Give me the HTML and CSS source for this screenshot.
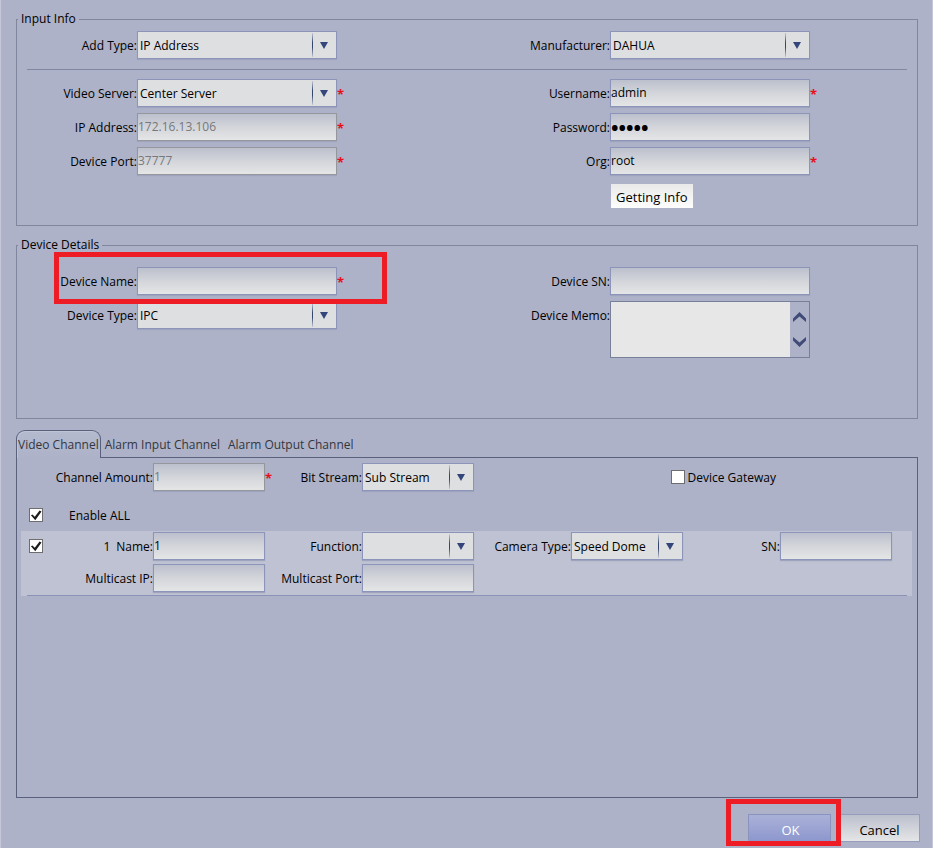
FILE: index.html
```html
<!DOCTYPE html>
<html lang="en">
<head>
	<meta charset="UTF-8">
	<meta name="viewport" content="width=device-width, initial-scale=1.0">
	<title>Add Device</title>
	<link rel="stylesheet" href="styles.css">
</head>
<body>
	<form class="dialog">
		<fieldset class="group">
			<legend>Input Info</legend>
			<div class="form">
				<label for="add-type">Add Type:</label>
				<div class="field">
					<span class="select"><select id="add-type"><option>IP Address</option></select></span>
				</div>
				<label for="manufacturer">Manufacturer:</label>
				<div class="field">
					<span class="select"><select id="manufacturer"><option>DAHUA</option></select></span>
				</div>
			</div>
			<hr class="line">
			<div class="form">
				<label for="video-server">Video Server:</label>
				<div class="field">
					<span class="select"><select id="video-server"><option>Center Server</option></select></span>
					<span class="required">*</span>
				</div>
				<label for="username">Username:</label>
				<div class="field">
					<input class="text" id="username" type="text" value="admin">
					<span class="required">*</span>
				</div>

				<label for="ip">IP Address:</label>
				<div class="field">
					<input class="text" id="ip" type="text" value="172.16.13.106" disabled>
					<span class="required">*</span>
				</div>
				<label for="password">Password:</label>
				<div class="field">
					<input class="text" id="password" type="password" value="admin">
				</div>

				<label for="port">Device Port:</label>
				<div class="field">
					<input class="text" id="port" type="text" value="37777" disabled>
					<span class="required">*</span>
				</div>
				<label for="org">Org:</label>
				<div class="field">
					<input class="text" id="org" type="text" value="root">
					<span class="required">*</span>
				</div>

				<div class="field field_last">
					<button class="get-info" type="button">Getting Info</button>
				</div>
			</div>
		</fieldset>

		<fieldset class="group group_details">
			<legend>Device Details</legend>
			<div class="form">
				<label for="device-name">Device Name:</label>
				<div class="field field_marked">
					<input class="text" id="device-name" type="text">
					<span class="required">*</span>
				</div>
				<label for="device-sn">Device SN:</label>
				<div class="field">
					<input class="text" id="device-sn" type="text">
				</div>

				<label for="device-type">Device Type:</label>
				<div class="field">
					<span class="select"><select id="device-type"><option>IPC</option></select></span>
				</div>
				<label for="memo">Device Memo:</label>
				<div class="memo">
					<textarea id="memo"></textarea>
					<div class="memo__scroll">
						<button type="button" aria-label="Up">
							<svg width="13" height="10" viewBox="0 0 13 10"><path d="M0 6.5 6.5 0 13 6.5V10L6.5 4.5 0 10z"/></svg>
						</button>
						<button type="button" aria-label="Down">
							<svg width="13" height="10" viewBox="0 0 13 10"><path d="M0 3.5 6.5 10 13 3.5V0L6.5 5.5 0 0z"/></svg>
						</button>
					</div>
				</div>
			</div>
		</fieldset>

		<div class="tabs" role="tablist">
			<button class="tab tab_active" type="button" role="tab" aria-selected="true">Video Channel</button>
			<button class="tab" type="button" role="tab">Alarm Input Channel</button>
			<button class="tab" type="button" role="tab">Alarm Output Channel</button>
		</div>
		<div class="channels" role="tabpanel">
			<div class="channels__row">
				<div class="cell cell_first">
					<label for="amount">Channel Amount:</label>
					<input class="text" id="amount" type="text" value="1" disabled>
					<span class="required">*</span>
				</div>
				<div class="cell">
					<label for="stream">Bit Stream:</label>
					<span class="select"><select id="stream"><option>Sub Stream</option></select></span>
				</div>
				<div class="gateway">
					<input class="check" id="gateway" type="checkbox">
					<label for="gateway">Device Gateway</label>
				</div>
			</div>
			<div class="enable">
				<input class="check" id="enable-all" type="checkbox" checked>
				<label for="enable-all">Enable ALL</label>
			</div>
			<div class="channel">
				<div class="channels__row">
					<input class="check" type="checkbox" aria-label="Channel 1" checked>
					<div class="cell">
						<span class="number">1</span>
						<label for="name-1">Name:</label>
						<input class="text" id="name-1" type="text" value="1">
					</div>
					<div class="cell">
						<label for="function-1">Function:</label>
						<span class="select"><select id="function-1"><option></option></select></span>
					</div>
					<div class="cell">
						<label for="camera-1">Camera Type:</label>
						<span class="select"><select id="camera-1"><option>Speed Dome</option></select></span>
					</div>
					<div class="cell">
						<label for="sn-1">SN:</label>
						<input class="text" id="sn-1" type="text">
					</div>
					<div class="cell cell_first">
						<label for="multicast-ip-1">Multicast IP:</label>
						<input class="text" id="multicast-ip-1" type="text">
					</div>
					<div class="cell">
						<label for="multicast-port-1">Multicast Port:</label>
						<input class="text" id="multicast-port-1" type="text">
					</div>
				</div>
				<hr class="channel__line">
			</div>
		</div>

		<div class="buttons">
			<div class="buttons__ok">
				<button class="button button_ok" type="submit">OK</button>
			</div>
			<button class="button" type="button">Cancel</button>
		</div>
	</form>
</body>
</html>
```
FILE: styles.css
```css
*, ::before, ::after {
	box-sizing: border-box;
}
body {
	margin: 0;
	background: #adb2c8;
	color: #000;
	font: 12px/16px "Open Sans", "Noto Sans", sans-serif;
}
input, select, textarea, button {
	font: inherit;
	color: inherit;
	margin: 0;
	border-radius: 0;
}
.dialog {
	min-height: 100vh;
	padding: 11px 14px 0 15px;
	border-left: 1px solid #c3c7d8;
	border-right: 1px solid #c3c7d8;
}

/* groups */
.group {
	min-width: 0;
	margin: 0 0 11px;
	padding: 4px 0 16px;
	border: 1px solid #80869d;
}
.group legend {
	margin-left: 1px;
	padding: 0 3px;
}
.group_details {
	padding: 14px 0 60px;
}
.line {
	height: 1px;
	margin: 10px 10px 9px;
	border: none;
	background: #8087a1;
}
.form {
	display: grid;
	grid-template-columns: 120px 23fr 120px 20fr;
	row-gap: 6px;
}
.form label {
	line-height: 30px;
	height: 28px;
	text-align: right;
	white-space: nowrap;
}
.field {
	display: flex;
	align-items: center;
	height: 28px;
}
.field .text,
.field .select {
	width: 200px;
}
.field_last {
	grid-column: 4;
	align-items: flex-end;
}

/* red frames over the form */
.field_marked,
.buttons__ok {
	position: relative;
}
.field_marked::after,
.buttons__ok::after {
	content: "";
	position: absolute;
	border: 5px solid #ee1c24;
	pointer-events: none;
}
.field_marked::after {
	z-index: 1;
	top: -15px;
	left: -83px;
	width: 333px;
	height: 52px;
}
.buttons__ok::after {
	top: -15px;
	left: -22px;
	right: -10px;
	height: 47px;
}

/* controls */
.text {
	min-width: 0;
	height: 28px;
	padding: 0 0 2px;
	border: 1px solid #8c94b9;
	background: linear-gradient(#bcc0cd, #d3d5da 50%, #e4e5e6);
	box-shadow: 0 1px 1px #9ea4bd;
}
.text:disabled {
	border-color: #96979c;
	color: #77787b;
}
.text[type="password"] {
	padding-bottom: 0;
	font-size: 20px;
	font-weight: 700;
}
.select {
	position: relative;
	display: block;
}
.select select {
	display: block;
	width: 100%;
	height: 28px;
	padding: 1px 26px 0 2px;
	appearance: none;
	border: 1px solid #8c94b9;
	background: #dddfe1;
	box-shadow: 0 1px 1px #9ea4bd;
}
.select::before {
	content: "";
	position: absolute;
	top: 2px;
	bottom: 2px;
	right: 24px;
	width: 1px;
	background: linear-gradient(#c3c8d4, #36466e 40%, #36466e 60%, #c3c8d4);
	pointer-events: none;
}
.select::after {
	content: "";
	position: absolute;
	top: 11px;
	right: 9px;
	width: 8px;
	height: 7px;
	background: #34457b;
	clip-path: polygon(0 0, 100% 0, 50% 100%);
	pointer-events: none;
}
.required {
	padding: 2px 0 0;
	color: #e5101c;
	font-size: 13px;
	font-weight: 700;
}
.get-info {
	height: 24px;
	margin: 0 0 1px 1px;
	padding: 2px 5px 0;
	border: none;
	background: linear-gradient(#e9e9ea, #fdfdfd);
	font-size: 13px;
}
.check {
	appearance: none;
	width: 14px;
	height: 14px;
	border: 1px solid #6d6d6f;
	background: #fff;
}
.check:checked::before {
	content: "";
	display: block;
	width: 12px;
	height: 12px;
	background: #1c1c1c;
	clip-path: polygon(8% 52%, 20% 45%, 40% 64%, 80% 12%, 96% 20%, 44% 94%);
}
.memo {
	display: flex;
	width: 200px;
	height: 57px;
	border: 1px solid #787f98;
}
.memo textarea {
	flex: 1;
	min-width: 0;
	padding: 2px;
	border: none;
	background: #e7e7e7;
	resize: none;
}
.memo__scroll {
	display: flex;
	flex-direction: column;
	justify-content: space-between;
	width: 19px;
	padding: 10px 3px;
}
.memo__scroll button {
	height: 10px;
	padding: 0;
	border: none;
	background: none;
}
.memo svg {
	display: block;
	fill: #414b78;
}

/* tabs */
.tabs {
	display: flex;
}
.tab {
	height: 27px;
	padding: 2px 3px 0;
	border: 1px solid transparent;
	border-bottom: none;
	background: none;
	color: #33363f;
	white-space: nowrap;
}
.tab_active {
	z-index: 1;
	height: 28px;
	margin-bottom: -1px;
	padding: 1px 1px 0;
	border-color: #59617d;
	border-radius: 9px 9px 0 0;
	background: linear-gradient(#b4bace, #adb2c8);
	box-shadow: inset 1px 1px #c0c5d6;
}
.channels {
	min-height: 341px;
	padding: 5px 5px 0 4px;
	border: 1px solid #59617d;
}
.channels__row {
	display: grid;
	grid-template-columns: 35px repeat(4, minmax(0, 1fr));
	row-gap: 4px;
	align-items: center;
	padding-right: 20px;
}
.channels .check {
	margin-left: 8px;
}
.cell {
	position: relative;
	display: flex;
	align-items: center;
	justify-content: flex-end;
	white-space: nowrap;
}
.cell .text,
.cell .select {
	flex: none;
	width: 112px;
}
.cell .required {
	position: absolute;
	left: 100%;
}
.cell_first {
	grid-column: 2;
}
.channels label {
	padding-top: 2px;
}
.number {
	margin-right: 6px;
	padding-top: 2px;
}
.gateway {
	grid-column: 4 / span 2;
	display: flex;
	align-items: center;
	justify-content: flex-end;
	gap: 3px;
	padding-right: 116px;
}
.enable {
	display: flex;
	align-items: center;
	gap: 26px;
	height: 28px;
	margin: 10px 0 2px;
}
.channel {
	padding-top: 1px;
	background: #bfc2d2;
}
.channel__line {
	height: 1px;
	margin: 3px 5px 0 6px;
	border: none;
	background: #8b93b6;
}

/* bottom buttons */
.buttons {
	display: flex;
	justify-content: flex-end;
	gap: 6px;
	margin: 16px -2px 0 0;
}
.button {
	display: block;
	width: 83px;
	height: 28px;
	padding: 4px 0 0 2px;
	border: 1px solid #969dbb;
	background: linear-gradient(#bcc0cd, #e4e5e6);
	font-size: 13px;
}
.button_ok {
	border-color: #8a93bd;
	background: linear-gradient(#aab1d8, #8d97cd);
	color: #fff;
}
```
